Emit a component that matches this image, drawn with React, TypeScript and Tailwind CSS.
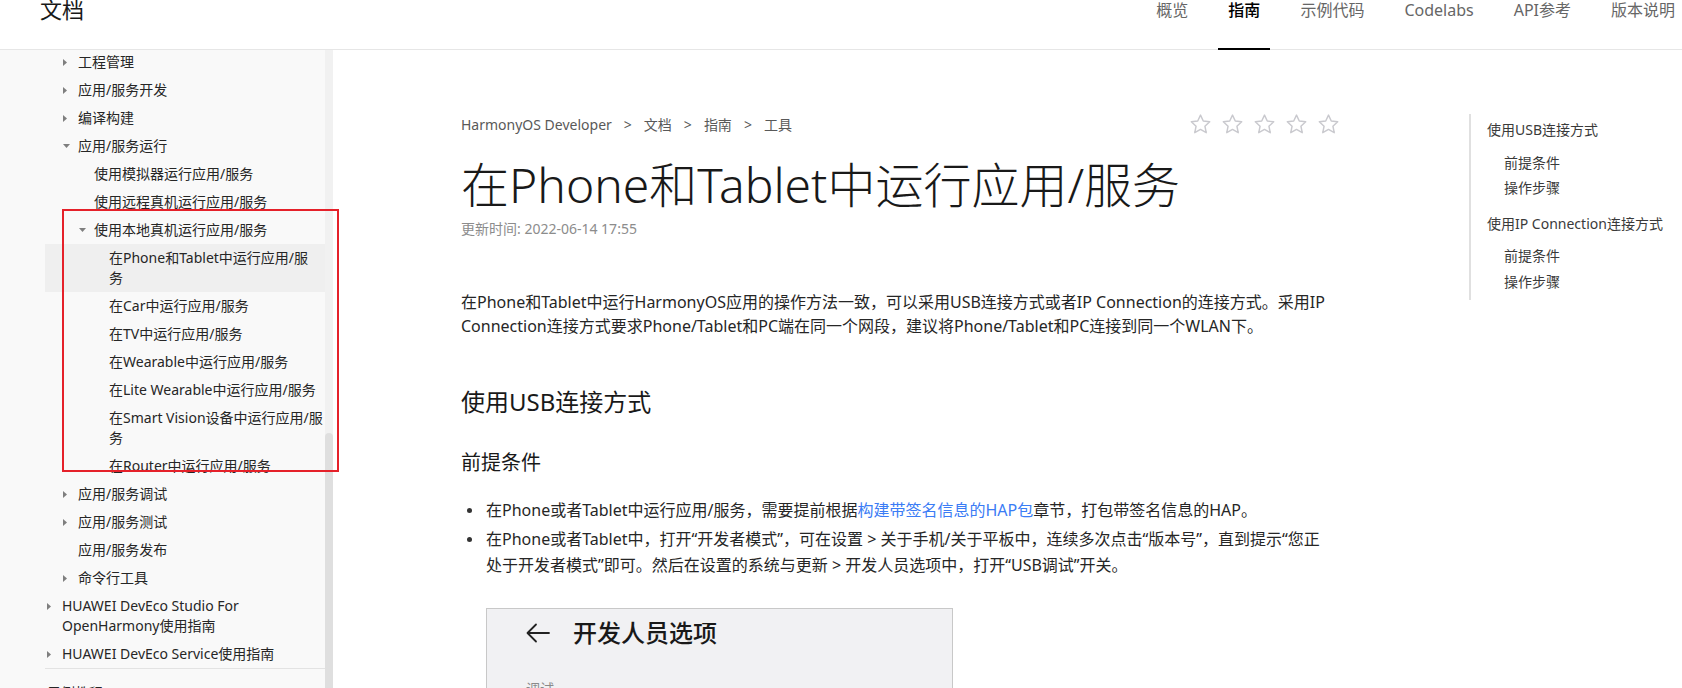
import React from 'react';

type SideItem = {
  label: string;
  level: 1 | 2 | 3 | 4;
  arrow?: 'right' | 'down';
  active?: boolean;
};

const sideItems: SideItem[] = [
  { label: '工程管理', level: 2, arrow: 'right' },
  { label: '应用/服务开发', level: 2, arrow: 'right' },
  { label: '编译构建', level: 2, arrow: 'right' },
  { label: '应用/服务运行', level: 2, arrow: 'down' },
  { label: '使用模拟器运行应用/服务', level: 3 },
  { label: '使用远程真机运行应用/服务', level: 3 },
  { label: '使用本地真机运行应用/服务', level: 3, arrow: 'down' },
  { label: '在Phone和Tablet中运行应用/服\n务', level: 4, active: true },
  { label: '在Car中运行应用/服务', level: 4 },
  { label: '在TV中运行应用/服务', level: 4 },
  { label: '在Wearable中运行应用/服务', level: 4 },
  { label: '在Lite Wearable中运行应用/服务', level: 4 },
  { label: '在Smart Vision设备中运行应用/服\n务', level: 4 },
  { label: '在Router中运行应用/服务', level: 4 },
  { label: '应用/服务调试', level: 2, arrow: 'right' },
  { label: '应用/服务测试', level: 2, arrow: 'right' },
  { label: '应用/服务发布', level: 2 },
  { label: '命令行工具', level: 2, arrow: 'right' },
  { label: 'HUAWEI DevEco Studio For\nOpenHarmony使用指南', level: 1, arrow: 'right' },
  { label: 'HUAWEI DevEco Service使用指南', level: 1, arrow: 'right' },
];

const levelPad: Record<number, string> = {
  1: 'pl-[1px]',
  2: 'pl-[17px]',
  3: 'pl-[33px]',
  4: 'pl-[48px]',
};

const topNav = [
  { label: '概览' },
  { label: '指南', active: true },
  { label: '示例代码' },
  { label: 'Codelabs' },
  { label: 'API参考' },
  { label: '版本说明' },
];

const Arrow = ({ dir }: { dir?: 'right' | 'down' }) => {
  if (dir === 'right') {
    return (
      <svg width="4" height="7" viewBox="0 0 4 7" className="ml-[1px]">
        <polygon points="0,0 4,3.5 0,7" fill="#7f7f7f" />
      </svg>
    );
  }
  if (dir === 'down') {
    return (
      <svg width="7" height="4" viewBox="0 0 7 4" className="ml-[1px]">
        <polygon points="0,0 7,0 3.5,4" fill="#7f7f7f" />
      </svg>
    );
  }
  return null;
};

const Star = () => (
  <svg width="23" height="23" viewBox="0 0 24 24" fill="none">
    <polygon
      points="12,2.2 14.9,8.4 21.6,9.2 16.6,13.8 18,20.6 12,17.2 6,20.6 7.4,13.8 2.4,9.2 9.1,8.4"
      stroke="#c9c9ce"
      strokeWidth="1.5"
      strokeLinejoin="round"
    />
  </svg>
);

const App = () => {
  return (
    <div className="relative h-[688px] overflow-hidden bg-white text-[#191919] font-['Noto_Sans','Noto_Sans_CJK_SC',sans-serif]">
      {/* Header */}
      <div className="flex h-[50px] items-start border-b border-[#e6e6e6]">
        <div className="mt-[-2px] pl-[40px] text-[22px] leading-[22px] text-[#191919]">文档</div>
        <div className="ml-auto mr-[-3px] flex gap-[20px]">
          {topNav.map((item) => (
            <div
              key={item.label}
              className={`h-[50px] whitespace-nowrap border-b-2 px-[10px] text-[16px] leading-[20px] ${
                item.active ? 'border-black font-medium text-black' : 'border-transparent text-[#666]'
              }`}
            >
              {item.label}
            </div>
          ))}
        </div>
      </div>

      <div className="flex h-[638px]">
        {/* Sidebar */}
        <div className="flex w-[333px] shrink-0 bg-[#f9f9f9]">
          <div className="w-[325px] overflow-hidden">
            <div className="ml-[45px] mt-[-2px] w-[280px]">
              {sideItems.map((item) => (
                <div
                  key={item.label}
                  className={`flex items-start py-[4px] text-[14px] leading-[20px] text-[#262626] ${levelPad[item.level]} ${
                    item.active ? 'bg-[#efefef]' : ''
                  }`}
                >
                  <span className="flex h-[20px] w-[16px] shrink-0 items-center">
                    <Arrow dir={item.arrow} />
                  </span>
                  <span className="whitespace-pre">{item.label}</span>
                </div>
              ))}
              <div className="border-t border-[#e3e3e3] pl-[2px] pt-[14px] text-[14px] leading-[20px] text-[#262626]">
                示例教程
              </div>
            </div>
          </div>
          <div className="w-[8px] bg-[#f1f1f1]">
            <div className="mt-[383px] h-[300px] rounded-t-[4px] bg-[#dfdfdf]"></div>
          </div>
        </div>

        {/* Main */}
        <div className="flex flex-1 overflow-hidden">
          <div className="ml-[128px] flex w-[879px] shrink-0 flex-col pt-[63px]">
            <div className="flex h-[24px] items-center justify-between">
              <div className="flex items-center text-[14px] leading-[20px] text-[#595959]">
                <span>HarmonyOS Developer</span>
                <span className="mx-[12px]">&gt;</span>
                <span>文档</span>
                <span className="mx-[12px]">&gt;</span>
                <span>指南</span>
                <span className="mx-[12px]">&gt;</span>
                <span>工具</span>
              </div>
              <div className="flex gap-[9px]">
                <Star />
                <Star />
                <Star />
                <Star />
                <Star />
              </div>
            </div>

            <h1 className="mt-[21px] text-[48px] font-light leading-[56px] text-[#191919]">
              在Phone和Tablet中运行应用/服务
            </h1>
            <div className="mt-[6px] text-[14px] leading-[20px] text-[#8c8c8c]">更新时间: 2022-06-14 17:55</div>

            <p className="mt-[51px] text-[16px] leading-[24px] text-[#262626]">
              在Phone和Tablet中运行HarmonyOS应用的操作方法一致，可以采用USB连接方式或者IP Connection的连接方式。采用IP
              Connection连接方式要求Phone/Tablet和PC端在同一个网段，建议将Phone/Tablet和PC连接到同一个WLAN下。
            </p>

            <h2 className="mt-[48px] text-[24px] leading-[32px] text-[#191919]">使用USB连接方式</h2>
            <h3 className="mt-[31px] text-[20px] leading-[28px] text-[#191919]">前提条件</h3>

            <ul className="mt-[20px] pr-[6px] text-[16px] leading-[26px] text-[#262626]">
              <li className="flex">
                <span className="flex h-[26px] w-[25px] shrink-0 items-center">
                  <span className="ml-[6px] h-[5px] w-[5px] rounded-full bg-[#333]"></span>
                </span>
                <span>
                  在Phone或者Tablet中运行应用/服务，需要提前根据
                  <span className="text-[#3b7cf5]">构建带签名信息的HAP包</span>
                  章节，打包带签名信息的HAP。
                </span>
              </li>
              <li className="mt-[3px] flex">
                <span className="flex h-[26px] w-[25px] shrink-0 items-center">
                  <span className="ml-[6px] h-[5px] w-[5px] rounded-full bg-[#333]"></span>
                </span>
                <span>
                  在Phone或者Tablet中，打开“开发者模式”，可在设置 &gt; 关于手机/关于平板中，连续多次点击“版本号”，直到提示“您正处于开发者模式”即可。然后在设置的系统与更新 &gt; 开发人员选项中，打开“USB调试”开关。
                </span>
              </li>
            </ul>

            {/* Screenshot of phone settings */}
            <div className="ml-[25px] mt-[30px] h-[120px] w-[467px] shrink-0 border border-[#c8c8c8] bg-[#f1f1f3] pl-[39px]">
              <div className="mt-[8px] flex h-[32px] items-center">
                <svg width="24" height="20" viewBox="0 0 24 20" fill="none">
                  <path d="M23 10H2M10 1.5L1.5 10L10 18.5" stroke="#222" strokeWidth="1.8" strokeLinecap="round" strokeLinejoin="round" />
                </svg>
                <span className="ml-[23px] text-[24px] font-medium leading-[32px] text-[#191919]">开发人员选项</span>
              </div>
              <div className="mt-[30px] text-[14px] leading-[20px] text-[#8a8a8a]">调试</div>
            </div>
          </div>

          {/* On this page */}
          <div className="ml-[129px] mt-[64px] h-[186px] w-[200px] shrink-0 border-l-2 border-[#e0e0e0] pt-[6px] text-[14px] leading-[20px] text-[#3a3a3a]">
            <div className="pl-[16px]">使用USB连接方式</div>
            <div className="mt-[13px] pl-[33px]">前提条件</div>
            <div className="mt-[5px] pl-[33px]">操作步骤</div>
            <div className="mt-[16px] pl-[16px]">使用IP Connection连接方式</div>
            <div className="mt-[12px] pl-[33px]">前提条件</div>
            <div className="mt-[6px] pl-[33px]">操作步骤</div>
          </div>
        </div>
      </div>

      {/* red annotation box */}
      <div className="pointer-events-none absolute left-[62px] top-[209px] h-[263px] w-[277px] border-2 border-[#e5212a]"></div>
    </div>
  );
};

export default App;
